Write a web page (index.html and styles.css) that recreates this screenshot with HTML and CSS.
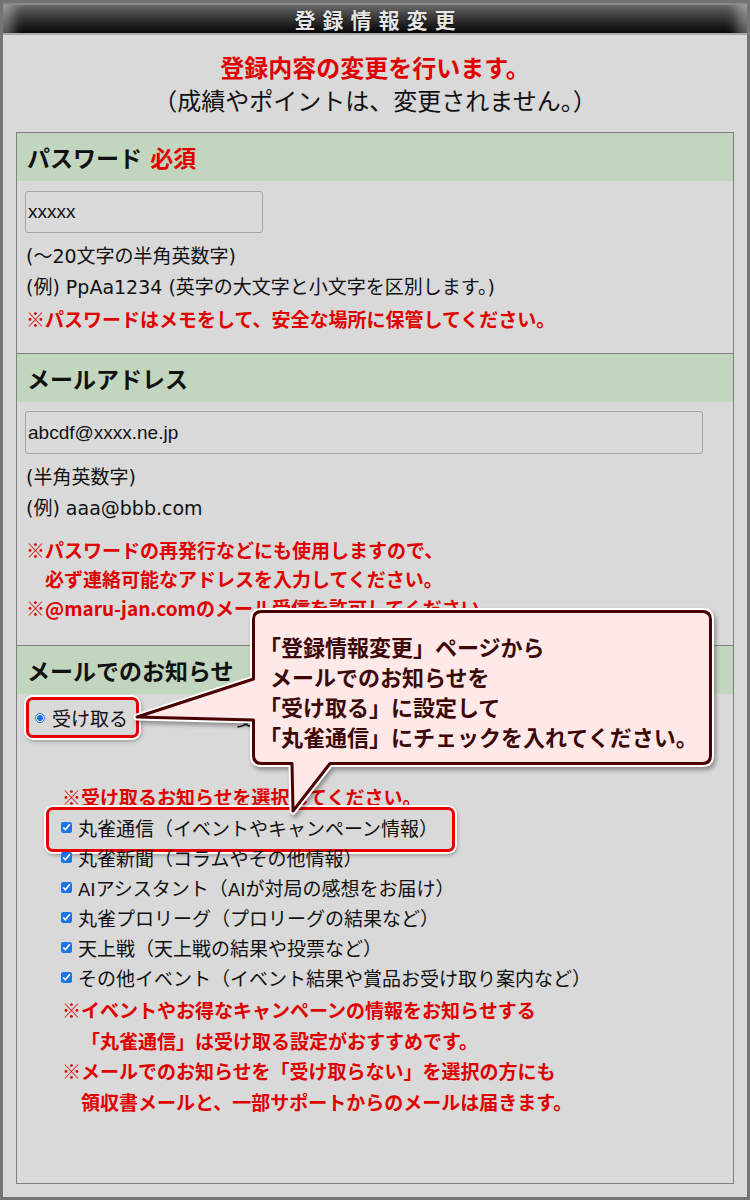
FILE: index.html
```html
<!DOCTYPE html>
<html lang="ja">
<head>
<meta charset="utf-8">
<title>登録情報変更</title>
<link rel="stylesheet" href="styles.css">
</head>
<body>
<div class="frame">
  <header class="topbar"><h1 class="topbar-title">登録情報変更</h1></header>

  <div class="intro">
    <p class="intro-red">登録内容の変更を行います。</p>
    <p class="intro-black">（成績やポイントは、変更されません。）</p>
  </div>

  <div class="panel">
    <section class="sec sec-pw">
      <h2 class="sec-head">パスワード <span class="req">必須</span></h2>
      <div class="sec-body">
        <input class="field field-pw" type="text" value="xxxxx" readonly>
        <div class="lines">
          <p>(～20文字の半角英数字)</p>
          <p>(例) PpAa1234 (英字の大文字と小文字を区別します。)</p>
          <p class="red">※パスワードはメモをして、安全な場所に保管してください。</p>
        </div>
      </div>
    </section>

    <section class="sec sec-mail">
      <h2 class="sec-head">メールアドレス</h2>
      <div class="sec-body">
        <input class="field field-mail" type="text" value="abcdf@xxxx.ne.jp" readonly>
        <div class="lines">
          <p>(半角英数字)</p>
          <p>(例) aaa@bbb.com</p>
        </div>
        <div class="lines-red">
          <p>※パスワードの再発行などにも使用しますので、</p>
          <p class="indent">必ず連絡可能なアドレスを入力してください。</p>
          <p>※@maru-jan.comのメール受信を許可してください。</p>
        </div>
      </div>
    </section>

    <section class="sec sec-news">
      <h2 class="sec-head">メールでのお知らせ</h2>
      <div class="sec-body">
        <div class="radio-row">
          <label class="radio-opt radio-on"><input type="radio" name="news" checked><span>受け取る</span></label>
          <label class="radio-opt radio-off"><input type="radio" name="news"><span>受け取らない</span></label>
        </div>
        <div class="checks">
          <p class="checks-note">※受け取るお知らせを選択してください。</p>
          <label class="check-row check-mark"><input type="checkbox" checked><span>丸雀通信（イベントやキャンペーン情報）</span></label>
          <label class="check-row"><input type="checkbox" checked><span>丸雀新聞（コラムやその他情報）</span></label>
          <label class="check-row"><input type="checkbox" checked><span><span class="latin">AI</span>アシスタント（<span class="latin">AI</span>が対局の感想をお届け）</span></label>
          <label class="check-row"><input type="checkbox" checked><span>丸雀プロリーグ（プロリーグの結果など）</span></label>
          <label class="check-row"><input type="checkbox" checked><span>天上戦（天上戦の結果や投票など）</span></label>
          <label class="check-row"><input type="checkbox" checked><span>その他イベント（イベント結果や賞品お受け取り案内など）</span></label>
          <div class="notes">
            <p>※イベントやお得なキャンペーンの情報をお知らせする</p>
            <p class="indent">「丸雀通信」は受け取る設定がおすすめです。</p>
            <p>※メールでのお知らせを「受け取らない」を選択の方にも</p>
            <p class="indent">領収書メールと、一部サポートからのメールは届きます。</p>
          </div>
        </div>
      </div>
    </section>
  </div>

  <div class="callout">
    <svg class="callout-shape" width="600" height="225" viewBox="0 0 600 225" aria-hidden="true">
      <path d="M141.5 11.5 H582.5 Q590.5 11.5 590.5 19.5 V155.5 Q590.5 163.5 582.5 163.5 H210 L173 211 L172 163.5 H141.5 Q133.5 163.5 133.5 155.5 V120 L17 117 L133.5 79 V19.5 Q133.5 11.5 141.5 11.5 Z" fill="#fff" stroke="#fff" stroke-width="7" stroke-linejoin="round"/>
      <path d="M141.5 11.5 H582.5 Q590.5 11.5 590.5 19.5 V155.5 Q590.5 163.5 582.5 163.5 H210 L173 211 L172 163.5 H141.5 Q133.5 163.5 133.5 155.5 V120 L17 117 L133.5 79 V19.5 Q133.5 11.5 141.5 11.5 Z" fill="#fee8e8" stroke="#4a0000" stroke-width="3" stroke-linejoin="round"/>
    </svg>
    <div class="callout-text">
      <p><span class="ob">「</span>登録情報変更」ページから</p>
      <p>メールでのお知らせを</p>
      <p><span class="ob">「</span>受け取る」に設定して</p>
      <p><span class="ob">「</span>丸雀通信」にチェックを入れてください。</p>
    </div>
  </div>
</div>
</body>
</html>
```

FILE: styles.css
```css
* { box-sizing: border-box; }

html, body {
  margin: 0;
  padding: 0;
}

body {
  font-family: "Noto Sans CJK JP", "Noto Sans", sans-serif;
  color: #111;
  background: #d9d9d9;
}

p { margin: 0; }

.frame {
  position: relative;
  width: 750px;
  height: 1200px;
  border: 3px solid #747474;
  background: #d9d9d9;
  display: flex;
  flex-direction: column;
  overflow: hidden;
}

/* top bar */
.topbar {
  height: 32px;
  flex: none;
  background: linear-gradient(#747474 0%, #4a4a4a 30%, #1e1e1e 70%, #000 100%);
  box-shadow:
    inset 0 -2px 0 #a8a8a8,
    inset 0 2px 0 #8a8a8a,
    inset 22px 0 12px -12px rgba(255,255,255,0.35),
    inset -22px 0 12px -12px rgba(255,255,255,0.35);
  display: flex;
  align-items: center;
  justify-content: center;
}

.topbar-title {
  margin: 0;
  font-size: 21px;
  font-weight: 700;
  line-height: 30px;
  letter-spacing: 7px;
  padding-left: 7px;
  color: #e6e6e6;
  text-shadow: 0 1px 1px #000;
}

/* intro */
.intro {
  flex: none;
  padding-top: 15px;
  text-align: center;
  font-size: 24px;
  line-height: 33px;
}

.intro-red {
  color: #e00000;
  font-weight: 700;
}

.intro-black {
  color: #111;
}

/* panel */
.panel {
  flex: none;
  height: 1052px;
  margin: 16px 13px 0;
  border: 1px solid #808080;
}

.sec + .sec {
  border-top: 1px solid #808080;
}

.sec-head {
  margin: 0;
  height: 48px;
  padding-left: 10px;
  background: #c2d5bf;
  font-size: 23px;
  font-weight: 700;
  line-height: 48px;
  color: #111;
  word-spacing: 3px;
}

.req { color: #e00000; }

.sec-body {
  padding: 0 8px;
  font-size: 19px;
}

.sec-pw .sec-body { padding-top: 10px; padding-bottom: 19px; }
.sec-mail .sec-body { padding-top: 9px; padding-bottom: 23px; }
.sec-news .sec-body { padding-top: 3px; }

.field {
  display: block;
  margin: 0 0 8px;
  padding: 0 2px;
  font-family: "Liberation Sans", Arial, sans-serif;
  font-size: 19px;
  color: #111;
  background: #dadada;
  border: 1px solid #a4a4a4;
  border-radius: 3px;
  outline: none;
}

.field-pw { width: 238px; height: 42px; }
.field-mail { width: 678px; height: 43px; }

.lines p {
  line-height: 31px;
  padding-left: 1px;
  font-family: "DejaVu Sans", "Noto Sans CJK JP", sans-serif;
  font-size: 19px;
}

.lines p.red {
  font-family: "Noto Sans CJK JP", "Noto Sans", sans-serif;
}

.red {
  color: #e00000;
  font-weight: 700;
}

.lines-red {
  margin-top: 11px;
  color: #e00000;
  font-weight: 700;
}

.lines-red p { line-height: 29px; padding-left: 1px; }
.lines-red p.indent { padding-left: calc(1em + 1px); }

.latin {
  font-family: "DejaVu Sans", sans-serif;
  font-size: 18px;
}

/* radios */
.radio-row {
  display: flex;
  align-items: center;
  height: 41px;
}

.radio-opt {
  display: inline-flex;
  align-items: center;
  gap: 7px;
  line-height: 30px;
}

.radio-opt input {
  margin: 0;
  width: 10px;
  height: 10px;
  accent-color: #1a73e8;
}

.radio-on {
  margin-left: 1px;
  height: 41px;
  padding: 0 8px 0 6px;
  border: 3px solid #e60000;
  border-radius: 7px;
  box-shadow: 0 0 0 2px #fff, 1px 2px 4px 1px rgba(0,0,0,0.35);
}

.radio-off {
  margin-left: 80px;
}

/* checks */
.checks {
  margin-top: 44px;
  padding-left: 36px;
}

.checks-note {
  color: #e00000;
  font-weight: 700;
  line-height: 30px;
  padding-left: 1px;
}

.check-row {
  position: relative;
  display: flex;
  align-items: center;
  gap: 6px;
  height: 30px;
}

.check-row input {
  margin: 0;
  width: 11px;
  height: 11px;
  accent-color: #1a73e8;
}

.check-mark::after {
  content: "";
  position: absolute;
  left: -15px;
  top: -5px;
  width: 403px;
  height: 39px;
  border: 3px solid #e60000;
  border-radius: 7px;
  box-shadow: 0 0 0 2px #fff, 1px 2px 4px 1px rgba(0,0,0,0.35);
}

.notes {
  margin-top: 3px;
  color: #e00000;
  font-weight: 700;
}

.notes p {
  line-height: 30.5px;
  padding-left: 1px;
}

.notes p.indent { padding-left: calc(1em + 1px); }

/* callout overlay */
.callout {
  position: absolute;
  left: 117px;
  top: 597px;
  width: 600px;
  height: 225px;
}

.callout-shape {
  position: absolute;
  left: 0;
  top: 0;
  filter: drop-shadow(2px 3px 2px rgba(0,0,0,0.35));
}

.callout-text {
  position: absolute;
  left: 150px;
  top: 31px;
  font-size: 22px;
  font-weight: 700;
  line-height: 30px;
  color: #3c0808;
  white-space: nowrap;
}

.ob {
  font-feature-settings: "halt";
}
```
